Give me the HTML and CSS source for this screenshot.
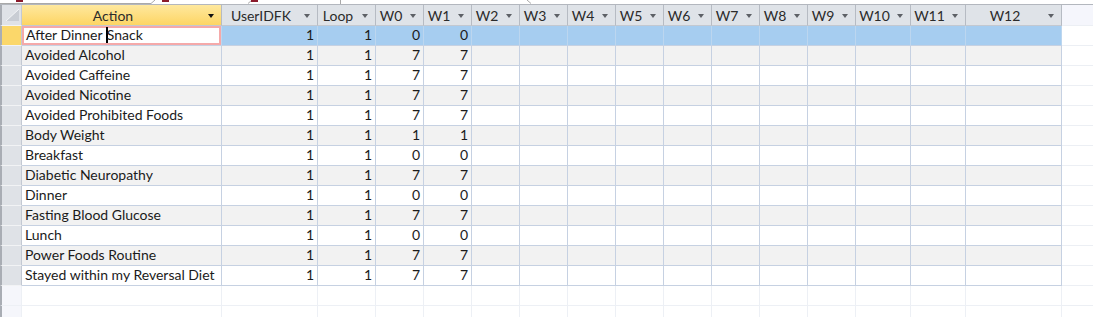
FILE: index.html
```html
<!DOCTYPE html>
<html lang="en">
<head>
    <meta charset="UTF-8">
    <title>Actions</title>
    <link rel="stylesheet" href="styles.css">
</head>
<body>
    <div class="sheet">
        <div class="tabs">
            <svg width="1093" height="4" viewBox="0 0 1093 4">
                <polyline points="0,3.5 151,3.5 155,0" fill="none" stroke="#a9a9a9" stroke-width="1"/>
                <polyline points="248,3.5 252,0" fill="none" stroke="#a9a9a9" stroke-width="1"/>
                <line x1="340.5" y1="0" x2="340.5" y2="4" stroke="#a9a9a9"/>
                <polyline points="527,0 531,3.5" fill="none" stroke="#a9a9a9" stroke-width="1"/>
                <rect x="16" y="0" width="7" height="2" fill="#8b1a2b"/>
                <rect x="162" y="0" width="7" height="2" fill="#8b1a2b"/>
                <rect x="251" y="0" width="7" height="2" fill="#8b1a2b"/>
            </svg>
        </div>

        <div class="row head">
            <div class="sel corner">
                <svg width="19" height="19" viewBox="0 0 19 19">
                    <polygon points="4,16 17,4 17,16" fill="#c9cdd4"/>
                    <line x1="4" y1="16" x2="17" y2="4" stroke="#f4f5f7" stroke-width="1"/>
                </svg>
            </div>
            <div class="hd hd-current"><span>Action</span><i class="arrow"></i></div>
            <div class="hd"><span>UserIDFK</span><i class="arrow"></i></div>
            <div class="hd"><span>Loop</span><i class="arrow"></i></div>
            <div class="hd"><span>W0</span><i class="arrow"></i></div>
            <div class="hd"><span>W1</span><i class="arrow"></i></div>
            <div class="hd"><span>W2</span><i class="arrow"></i></div>
            <div class="hd"><span>W3</span><i class="arrow"></i></div>
            <div class="hd"><span>W4</span><i class="arrow"></i></div>
            <div class="hd"><span>W5</span><i class="arrow"></i></div>
            <div class="hd"><span>W6</span><i class="arrow"></i></div>
            <div class="hd"><span>W7</span><i class="arrow"></i></div>
            <div class="hd"><span>W8</span><i class="arrow"></i></div>
            <div class="hd"><span>W9</span><i class="arrow"></i></div>
            <div class="hd"><span>W10</span><i class="arrow"></i></div>
            <div class="hd"><span>W11</span><i class="arrow"></i></div>
            <div class="hd"><span>W12</span><i class="arrow"></i></div>
            <div class="fill"></div>
        </div>

        <div class="row current">
            <div class="sel"></div>
            <div class="cell text edit">After Dinner <span class="caret"></span>Snack</div>
            <div class="cell num">1</div><div class="cell num">1</div><div class="cell num">0</div><div class="cell num">0</div>
            <div class="cell"></div><div class="cell"></div><div class="cell"></div><div class="cell"></div><div class="cell"></div><div class="cell"></div><div class="cell"></div><div class="cell"></div><div class="cell"></div><div class="cell"></div><div class="cell"></div>
            <div class="fill"></div>
        </div>
        <div class="row alt">
            <div class="sel"></div>
            <div class="cell text">Avoided Alcohol</div>
            <div class="cell num">1</div><div class="cell num">1</div><div class="cell num">7</div><div class="cell num">7</div>
            <div class="cell"></div><div class="cell"></div><div class="cell"></div><div class="cell"></div><div class="cell"></div><div class="cell"></div><div class="cell"></div><div class="cell"></div><div class="cell"></div><div class="cell"></div><div class="cell"></div>
            <div class="fill"></div>
        </div>
        <div class="row">
            <div class="sel"></div>
            <div class="cell text">Avoided Caffeine</div>
            <div class="cell num">1</div><div class="cell num">1</div><div class="cell num">7</div><div class="cell num">7</div>
            <div class="cell"></div><div class="cell"></div><div class="cell"></div><div class="cell"></div><div class="cell"></div><div class="cell"></div><div class="cell"></div><div class="cell"></div><div class="cell"></div><div class="cell"></div><div class="cell"></div>
            <div class="fill"></div>
        </div>
        <div class="row alt">
            <div class="sel"></div>
            <div class="cell text">Avoided Nicotine</div>
            <div class="cell num">1</div><div class="cell num">1</div><div class="cell num">7</div><div class="cell num">7</div>
            <div class="cell"></div><div class="cell"></div><div class="cell"></div><div class="cell"></div><div class="cell"></div><div class="cell"></div><div class="cell"></div><div class="cell"></div><div class="cell"></div><div class="cell"></div><div class="cell"></div>
            <div class="fill"></div>
        </div>
        <div class="row">
            <div class="sel"></div>
            <div class="cell text">Avoided Prohibited Foods</div>
            <div class="cell num">1</div><div class="cell num">1</div><div class="cell num">7</div><div class="cell num">7</div>
            <div class="cell"></div><div class="cell"></div><div class="cell"></div><div class="cell"></div><div class="cell"></div><div class="cell"></div><div class="cell"></div><div class="cell"></div><div class="cell"></div><div class="cell"></div><div class="cell"></div>
            <div class="fill"></div>
        </div>
        <div class="row alt">
            <div class="sel"></div>
            <div class="cell text">Body Weight</div>
            <div class="cell num">1</div><div class="cell num">1</div><div class="cell num">1</div><div class="cell num">1</div>
            <div class="cell"></div><div class="cell"></div><div class="cell"></div><div class="cell"></div><div class="cell"></div><div class="cell"></div><div class="cell"></div><div class="cell"></div><div class="cell"></div><div class="cell"></div><div class="cell"></div>
            <div class="fill"></div>
        </div>
        <div class="row">
            <div class="sel"></div>
            <div class="cell text">Breakfast</div>
            <div class="cell num">1</div><div class="cell num">1</div><div class="cell num">0</div><div class="cell num">0</div>
            <div class="cell"></div><div class="cell"></div><div class="cell"></div><div class="cell"></div><div class="cell"></div><div class="cell"></div><div class="cell"></div><div class="cell"></div><div class="cell"></div><div class="cell"></div><div class="cell"></div>
            <div class="fill"></div>
        </div>
        <div class="row alt">
            <div class="sel"></div>
            <div class="cell text">Diabetic Neuropathy</div>
            <div class="cell num">1</div><div class="cell num">1</div><div class="cell num">7</div><div class="cell num">7</div>
            <div class="cell"></div><div class="cell"></div><div class="cell"></div><div class="cell"></div><div class="cell"></div><div class="cell"></div><div class="cell"></div><div class="cell"></div><div class="cell"></div><div class="cell"></div><div class="cell"></div>
            <div class="fill"></div>
        </div>
        <div class="row">
            <div class="sel"></div>
            <div class="cell text">Dinner</div>
            <div class="cell num">1</div><div class="cell num">1</div><div class="cell num">0</div><div class="cell num">0</div>
            <div class="cell"></div><div class="cell"></div><div class="cell"></div><div class="cell"></div><div class="cell"></div><div class="cell"></div><div class="cell"></div><div class="cell"></div><div class="cell"></div><div class="cell"></div><div class="cell"></div>
            <div class="fill"></div>
        </div>
        <div class="row alt">
            <div class="sel"></div>
            <div class="cell text">Fasting Blood Glucose</div>
            <div class="cell num">1</div><div class="cell num">1</div><div class="cell num">7</div><div class="cell num">7</div>
            <div class="cell"></div><div class="cell"></div><div class="cell"></div><div class="cell"></div><div class="cell"></div><div class="cell"></div><div class="cell"></div><div class="cell"></div><div class="cell"></div><div class="cell"></div><div class="cell"></div>
            <div class="fill"></div>
        </div>
        <div class="row">
            <div class="sel"></div>
            <div class="cell text">Lunch</div>
            <div class="cell num">1</div><div class="cell num">1</div><div class="cell num">0</div><div class="cell num">0</div>
            <div class="cell"></div><div class="cell"></div><div class="cell"></div><div class="cell"></div><div class="cell"></div><div class="cell"></div><div class="cell"></div><div class="cell"></div><div class="cell"></div><div class="cell"></div><div class="cell"></div>
            <div class="fill"></div>
        </div>
        <div class="row alt">
            <div class="sel"></div>
            <div class="cell text">Power Foods Routine</div>
            <div class="cell num">1</div><div class="cell num">1</div><div class="cell num">7</div><div class="cell num">7</div>
            <div class="cell"></div><div class="cell"></div><div class="cell"></div><div class="cell"></div><div class="cell"></div><div class="cell"></div><div class="cell"></div><div class="cell"></div><div class="cell"></div><div class="cell"></div><div class="cell"></div>
            <div class="fill"></div>
        </div>
        <div class="row">
            <div class="sel"></div>
            <div class="cell text">Stayed within my Reversal Diet</div>
            <div class="cell num">1</div><div class="cell num">1</div><div class="cell num">7</div><div class="cell num">7</div>
            <div class="cell"></div><div class="cell"></div><div class="cell"></div><div class="cell"></div><div class="cell"></div><div class="cell"></div><div class="cell"></div><div class="cell"></div><div class="cell"></div><div class="cell"></div><div class="cell"></div>
            <div class="fill"></div>
        </div>

        <div class="row empty">
            <div class="sel"></div>
            <div class="cell"></div><div class="cell"></div><div class="cell"></div><div class="cell"></div><div class="cell"></div><div class="cell"></div><div class="cell"></div><div class="cell"></div><div class="cell"></div><div class="cell"></div><div class="cell"></div><div class="cell"></div><div class="cell"></div><div class="cell"></div><div class="cell"></div><div class="cell"></div>
            <div class="fill"></div>
        </div>
        <div class="row empty">
            <div class="sel"></div>
            <div class="cell"></div><div class="cell"></div><div class="cell"></div><div class="cell"></div><div class="cell"></div><div class="cell"></div><div class="cell"></div><div class="cell"></div><div class="cell"></div><div class="cell"></div><div class="cell"></div><div class="cell"></div><div class="cell"></div><div class="cell"></div><div class="cell"></div><div class="cell"></div>
            <div class="fill"></div>
        </div>
    </div>
</body>
</html>
```

FILE: styles.css
```css
body {
    margin: 0;
    background-color: white;
    font-family: Lato, "Open Sans", sans-serif;
    font-size: 14px;
    color: #1b1b1b;
    overflow: hidden;
}

.sheet {
    width: 1093px;
}

.tabs {
    height: 4px;
    overflow: hidden;
}

.tabs svg {
    display: block;
}

/* one grid track per column, shared by header and all rows */
.row {
    display: grid;
    grid-template-columns: 22px 200px 96px 58px repeat(10, 48px) 55px 55px 96px 1fr;
    height: 20px;
}

.row > div {
    box-sizing: border-box;
    border-right: 1px solid #c6d1e2;
    border-bottom: 1px solid #c6d1e2;
    line-height: 18px;
    white-space: nowrap;
    overflow: hidden;
}

/* header */
.row.head {
    height: 21px;
    border-top: 1px solid #b3b7be;
}

.row.head > div {
    line-height: 19px;
}

.hd {
    display: flex;
    align-items: center;
    background-color: #dfe3e8;
    color: #2b2b2b;
    border-right-color: #b6bbc3 !important;
    border-bottom-color: #c3c8d0 !important;
}

.hd span {
    flex: 1;
    text-align: center;
    padding-left: 2px;
}

.hd-current {
    background: linear-gradient(#fee89e, #fdd564);
}

.arrow {
    width: 0;
    height: 0;
    border-left: 3.5px solid transparent;
    border-right: 3.5px solid transparent;
    border-top: 4px solid #5d6066;
    margin: 1px 7px 0 6px;
}

.hd-current .arrow {
    border-top-color: #111;
}

/* row selector column */
.sel {
    background-color: #dfe2e7;
    border-left: 2px solid #a9adb4;
    border-right-color: #c3c9d3 !important;
    border-bottom-color: #f2f3f5 !important;
}

.sel.corner {
    padding: 0;
}

.sel.corner svg {
    display: block;
}

.current .sel {
    background-color: #fbd76a;
}

/* cells */
.cell.text {
    padding: 0 3px;
}

.cell.num {
    text-align: right;
    padding-right: 3px;
}

.alt .cell {
    background-color: #f2f2f2;
}

.current .cell {
    background-color: #a6cdf0;
    border-right-color: #bcd6ef;
}

.current .cell.edit {
    background-color: white;
    box-shadow: inset 0 0 0 2px #f5a9a9;
    padding-left: 4px;
}

.caret {
    display: inline-block;
    width: 0;
    height: 16px;
    border-left: 2px solid #000;
    margin-right: -1px;
    vertical-align: -3px;
}

/* filler to the right of the last column */
.fill {
    background-color: white;
    border-right: none !important;
    border-bottom-color: #eceff4 !important;
}

.head .fill {
    background-color: #f5f6fc;
}

/* new-record area below the data */
.empty .cell {
    border-right-color: #edf0f5;
    border-bottom-color: #edf0f5;
}

.empty .sel {
    background-color: #f5f6fb;
    border-right-color: #edf0f5 !important;
    border-bottom-color: #edf0f5 !important;
}
```
